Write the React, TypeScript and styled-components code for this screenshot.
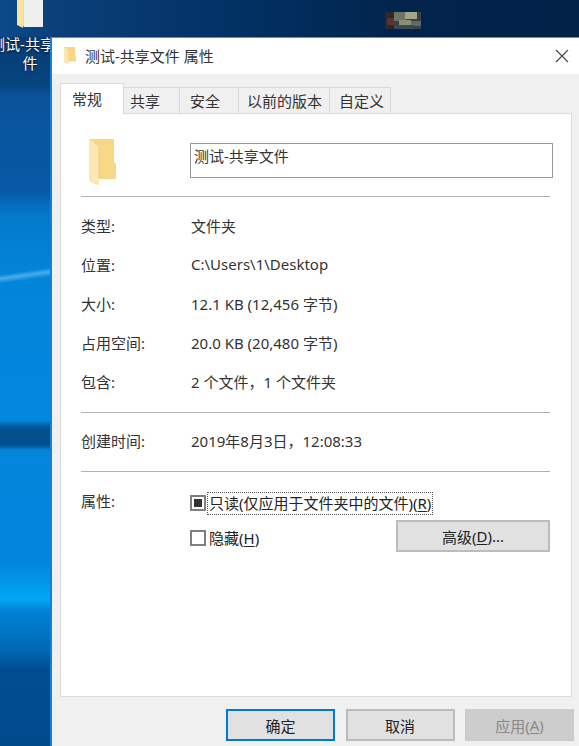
import React from 'react';
import styled, { createGlobalStyle } from 'styled-components';

const GlobalStyle = createGlobalStyle`
  html, body {
    margin: 0;
    padding: 0;
    overflow: hidden;
  }
  body {
    font-family: 'Noto Sans', 'Noto Sans CJK SC', sans-serif;
    font-size: 15px;
    color: #222;
  }
`;

const Desktop = styled.div`
  position: relative;
  width: 579px;
  height: 746px;
  overflow: hidden;
  background:
    linear-gradient(90deg, #0b4a8c 0, #0a3f78 60px, #023266 220px, #01244c 400px, #012348 579px) top / 100% 37px no-repeat,
    linear-gradient(172deg, transparent 0 272px, rgba(130, 205, 250, 0.55) 276px, transparent 281px) 0 0 / 51px 100% no-repeat,
    linear-gradient(180deg,
      #0a3468 0, #0a3a72 30px, #07447f 84px, #0a539a 96px, #0758a6 190px, #0479cb 215px, #0284d8 270px,
      #0388e0 420px, #02508f 428px, #02508f 445px, #0386dc 450px, #0384de 560px, #00a8f4 600px, #0083d6 610px,
      #0069b4 650px, #004d92 670px, #004a8c 746px);
`;

const DesktopIcon = styled.div`
  position: absolute;
  left: -12px;
  top: 0;
  width: 84px;
  display: flex;
  flex-direction: column;
  align-items: center;
  color: #fff;
  text-shadow: 0 1px 2px rgba(0, 0, 0, 0.85);
  line-height: 19px;
  text-align: center;
`;

const DesktopLabel = styled.span`
  width: 84px;
  word-break: break-all;
  margin-top: 7px;
`;

const Thumbnail = styled.svg`
  position: absolute;
  left: 385px;
  top: 12px;
  filter: blur(0.6px);
`;

const Window = styled.div`
  position: absolute;
  left: 50px;
  top: 37px;
  width: 529px;
  height: 709px;
  box-sizing: border-box;
  border-left: 2px solid #1481d8;
  border-top: 1px solid #3f97e0;
  display: flex;
  flex-direction: column;
  background: #f0f0f0;
`;

const TitleBar = styled.div`
  height: 36px;
  box-sizing: border-box;
  background: #fff;
  display: flex;
  align-items: center;
  padding: 0 10px 1px 12px;
  flex: none;
`;

const TitleText = styled.span`
  margin-left: 9px;
  flex: 1;
  color: #333;
`;

const Body = styled.div`
  flex: 1;
  display: flex;
  flex-direction: column;
  padding: 10px 7px 0 8px;
  min-height: 0;
`;

const TabRow = styled.div`
  display: flex;
  height: 30px;
  align-items: flex-end;
  position: relative;
  z-index: 1;
  margin-bottom: -1px;
`;

const Tab = styled.div<{ $active?: boolean; $width: number; $pad: number }>`
  box-sizing: border-box;
  width: ${(p) => p.$width}px;
  height: ${(p) => (p.$active ? 31 : 27)}px;
  border: 1px solid #d9d9d9;
  border-left-width: ${(p) => (p.$active ? 1 : 0)}px;
  border-bottom: ${(p) => (p.$active ? 'none' : '1px solid #d9d9d9')};
  background: ${(p) => (p.$active ? '#fff' : '#f0f0f0')};
  padding-left: ${(p) => p.$pad}px;
  white-space: nowrap;
  line-height: ${(p) => (p.$active ? 30 : 27)}px;
  color: #333;
`;

const Panel = styled.div`
  box-sizing: border-box;
  width: 512px;
  height: 584px;
  flex: none;
  background: #fff;
  border: 1px solid #dcdcdc;
  padding: 24px 21px 0 20px;
  display: flex;
  flex-direction: column;
`;

const Header = styled.div`
  display: flex;
  align-items: flex-start;
  height: 58px;
`;

const FolderSlot = styled.div`
  width: 109px;
  padding: 1px 0 0 8px;
  box-sizing: border-box;
  flex: none;
`;

const NameBox = styled.div`
  box-sizing: border-box;
  width: 363px;
  height: 35px;
  flex: none;
  margin-top: 5px;
  border: 1px solid #9a9a9a;
  padding: 2px 3px;
  line-height: 20px;
  color: #333;
`;

const Divider = styled.div`
  width: 469px;
  height: 1px;
  background: #b0b0b0;
  flex: none;
`;

const InfoList = styled.div`
  display: flex;
  flex-direction: column;
  padding: 10px 0;
`;

const DateList = styled(InfoList)`
  padding: 9px 0 10px;
`;

const InfoRow = styled.div`
  display: grid;
  box-sizing: border-box;
  grid-template-columns: 110px 1fr;
  height: 39px;
  padding-bottom: 3px;
  align-items: center;
`;

const Label = styled.span`
  color: #333;
`;

const Value = styled.span`
  color: #333;
`;

const AttrSection = styled.div`
  display: grid;
  grid-template-columns: 109px 1fr;
  padding-top: 19px;
`;

const AttrLabel = styled.span`
  color: #333;
  line-height: 20px;
`;

const AttrOptions = styled.div`
  display: flex;
  flex-direction: column;
`;

const CheckLine = styled.div`
  display: flex;
  align-items: center;
  height: 24px;
`;

const SecondLine = styled.div`
  display: flex;
  align-items: flex-start;
  justify-content: space-between;
  width: 360px;
  margin-top: 5px;
`;

const HiddenLine = styled(CheckLine)`
  margin-top: 6px;
`;

const CheckBox = styled.span<{ $mixed?: boolean }>`
  box-sizing: border-box;
  width: 16px;
  height: 16px;
  border: 2px solid #808080;
  background: #fff;
  display: flex;
  align-items: center;
  justify-content: center;
  flex: none;
  &::after {
    content: '';
    display: ${(p) => (p.$mixed ? 'block' : 'none')};
    width: 8px;
    height: 8px;
    background: #333;
  }
`;

const FocusText = styled.span`
  margin-left: 2px;
  padding: 0 1px;
  outline: 1px dotted #555;
  line-height: 21px;
  white-space: nowrap;
`;

const PlainText = styled.span`
  margin-left: 3px;
  margin-bottom: 1px;
`;

const Key = styled.span`
  text-decoration: underline;
  text-underline-offset: 2px;
`;

const Button = styled.div<{ $primary?: boolean; $disabled?: boolean }>`
  box-sizing: border-box;
  height: 32px;
  width: 109px;
  display: flex;
  align-items: center;
  justify-content: center;
  background: ${(p) => (p.$disabled ? '#cccccc' : '#e1e1e1')};
  border: 2px solid ${(p) => (p.$primary ? '#0078d7' : p.$disabled ? '#cccccc' : '#bcbcbc')};
  color: ${(p) => (p.$disabled ? '#8a8a8a' : '#222')};
`;

const AdvancedButton = styled(Button)`
  width: 154px;
`;

const Footer = styled.div`
  display: flex;
  justify-content: flex-end;
  gap: 10.5px;
  padding-top: 12px;
  margin-right: -2px;
`;

const FolderIcon: React.FC<{ width: number; height: number }> = ({ width, height }) => (
  <svg width={width} height={height} viewBox="0 0 27 47" preserveAspectRatio="none">
    <path d="M0 0H25V24H27V40H9V46L0 42Z" fill="#f6d887" />
    <path d="M0 0L10 8V46L0 42Z" fill="#fce8b2" />
    <path d="M10 8V40" stroke="#e9c873" strokeWidth="0.8" />
  </svg>
);

const DesktopFolder: React.FC = () => (
  <svg width="27" height="28" viewBox="0 0 27 28">
    <path d="M0 0H26V27H8L0 24Z" fill="#f7d98c" />
    <path d="M7 0H26V27H7Z" fill="#eef0f0" />
    <path d="M0 0H6V28L0 25Z" fill="#fbe29e" />
  </svg>
);

const App: React.FC = () => (
  <>
    <GlobalStyle />
    <Desktop>
      <DesktopIcon>
        <DesktopFolder />
        <DesktopLabel>测试-共享文件</DesktopLabel>
      </DesktopIcon>
      <Thumbnail width="36" height="17" viewBox="0 0 36 17">
        <rect width="36" height="17" fill="#3a3f42" />
        <rect width="9" height="17" fill="#33262a" />
        <rect x="2" y="6" width="7" height="7" fill="#5a3430" />
        <rect x="9" y="0" width="12" height="9" fill="#6f7468" />
        <rect x="20" y="0" width="12" height="7" fill="#a5a58c" />
        <rect x="14" y="8" width="12" height="5" fill="#8d8e78" />
        <rect x="26" y="9" width="10" height="5" fill="#5d6a6c" />
        <rect x="9" y="13" width="20" height="4" fill="#3b4a50" />
      </Thumbnail>
      <Window>
        <TitleBar>
          <FolderIcon width={12} height={17} />
          <TitleText>测试-共享文件 属性</TitleText>
          <svg width="14" height="14" viewBox="0 0 14 14">
            <path d="M1 1L13 13M13 1L1 13" stroke="#444" strokeWidth="1.1" />
          </svg>
        </TitleBar>
        <Body>
          <TabRow>
            <Tab $active $width={64} $pad={11}>常规</Tab>
            <Tab $width={56} $pad={6}>共享</Tab>
            <Tab $width={59} $pad={10}>安全</Tab>
            <Tab $width={91} $pad={8}>以前的版本</Tab>
            <Tab $width={61} $pad={9}>自定义</Tab>
          </TabRow>
          <Panel>
            <Header>
              <FolderSlot>
                <FolderIcon width={27} height={47} />
              </FolderSlot>
              <NameBox>测试-共享文件</NameBox>
            </Header>
            <Divider />
            <InfoList>
              <InfoRow><Label>类型:</Label><Value>文件夹</Value></InfoRow>
              <InfoRow><Label>位置:</Label><Value>C:\Users\1\Desktop</Value></InfoRow>
              <InfoRow><Label>大小:</Label><Value>12.1 KB (12,456 字节)</Value></InfoRow>
              <InfoRow><Label>占用空间:</Label><Value>20.0 KB (20,480 字节)</Value></InfoRow>
              <InfoRow><Label>包含:</Label><Value>2 个文件，1 个文件夹</Value></InfoRow>
            </InfoList>
            <Divider />
            <DateList>
              <InfoRow><Label>创建时间:</Label><Value>2019年8月3日，12:08:33</Value></InfoRow>
            </DateList>
            <Divider />
            <AttrSection>
              <AttrLabel>属性:</AttrLabel>
              <AttrOptions>
                <CheckLine>
                  <CheckBox $mixed />
                  <FocusText>只读(仅应用于文件夹中的文件)(<Key>R</Key>)</FocusText>
                </CheckLine>
                <SecondLine>
                  <HiddenLine>
                    <CheckBox />
                    <PlainText>隐藏(<Key>H</Key>)</PlainText>
                  </HiddenLine>
                  <AdvancedButton>高级(<Key>D</Key>)...</AdvancedButton>
                </SecondLine>
              </AttrOptions>
            </AttrSection>
          </Panel>
          <Footer>
            <Button $primary>确定</Button>
            <Button>取消</Button>
            <Button $disabled>应用(<Key>A</Key>)</Button>
          </Footer>
        </Body>
      </Window>
    </Desktop>
  </>
);

export default App;
